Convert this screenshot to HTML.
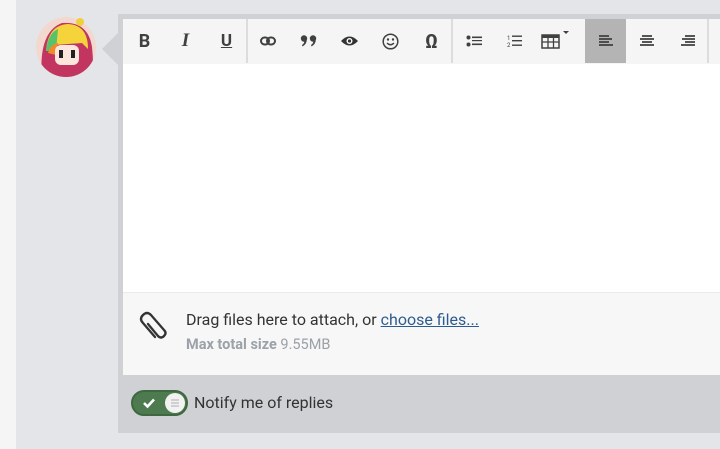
<!DOCTYPE html>
<html><head><style>
*{margin:0;padding:0;box-sizing:border-box}
body{width:720px;height:449px;background:#e4e5e9;position:relative;overflow:hidden;font-family:"Roboto","Liberation Sans",sans-serif}
.strip{position:absolute;left:0;top:0;width:16px;height:449px;background:#f5f5f5}
.outer{position:absolute;left:118px;top:14px;width:610px;height:419px;background:#d0d1d5}
.tb{position:absolute;left:123px;top:19px;width:600px;height:45px;background:#f5f5f5}
.content{position:absolute;left:123px;top:64px;width:600px;height:228px;background:#fff}
.attach{position:absolute;left:123px;top:292px;width:600px;height:83px;background:#f7f7f7;border-top:1px solid #eaeaea}
.btn{position:absolute;top:19px;width:41px;height:44px;display:flex;align-items:center;justify-content:center;color:#404040}
.sep{position:absolute;top:19px;width:2px;height:44px;background:#dcdcdc}
.t1{position:absolute;left:186px;top:310px;font-size:16px;color:#333}
.t1 a{color:#2e5b8f;text-decoration:underline}
.t2{position:absolute;left:186px;top:336px;font-size:14.5px;color:#9ba1a8}
.t3{position:absolute;left:194px;top:393px;font-size:16px;color:#333}
.tog{position:absolute;left:131px;top:390px;width:57px;height:26px;border-radius:13px;background:#4d7a4f;border:2px solid #3f6841}
.knob{position:absolute;right:1px;top:1px;width:20px;height:20px;border-radius:50%;background:#f2f2f2}
</style></head><body>
<div class="strip"></div>
<svg style="position:absolute;left:36px;top:17px" width="62" height="62"><defs><clipPath id="c"><circle cx="30" cy="30" r="30"/></clipPath></defs><g clip-path="url(#c)"><circle cx="30" cy="30" r="30" fill="#f3d8cf"/><path d="M6 62 Q2 15 26 6 Q52 4 56 30 Q58 48 56 62Z" fill="#c23561"/><path d="M10 34 Q12 8 32 7 Q52 8 52 32 L46 26 L18 28Z" fill="#f5d33b"/><path d="M10 34 Q12 16 22 12 L20 34Z" fill="#58c26b"/><path d="M12 36 Q14 28 22 26 L20 38Z" fill="#f08a2a"/><rect x="19" y="28" width="24" height="20" rx="6" fill="#fbe7dc"/><rect x="23" y="33" width="4" height="8" fill="#222"/><rect x="35" y="33" width="4" height="8" fill="#222"/></g><circle cx="44" cy="5" r="4" fill="#f0d03a"/></svg>
<svg style="position:absolute;left:102px;top:32px" width="17" height="34"><path d="M17 0 L0 17 L17 34Z" fill="#d0d1d5"/></svg>
<div class="outer"></div>
<div class="tb"></div>
<div class="content"></div>
<div class="attach"></div>
<div class="btn" style="left:124px;font-weight:bold;font-size:18px">B</div>
<div class="btn" style="left:165px;font-style:italic;font-size:19px;font-family:'Liberation Serif',serif;font-weight:bold">I</div>
<div class="btn" style="left:206px;font-weight:bold;font-size:17px;text-decoration:underline">U</div>
<div class="sep" style="left:246px"></div>
<div class="btn" style="left:247px"><svg width="16" height="10"><rect x="1" y="1.5" width="8" height="7" rx="3.5" fill="none" stroke="#404040" stroke-width="2"/><rect x="7" y="1.5" width="8" height="7" rx="3.5" fill="none" stroke="#404040" stroke-width="2"/></svg></div>
<div class="btn" style="left:288px"><svg width="18" height="12"><circle cx="4" cy="3.5" r="3.2" fill="#404040"/><path d="M6.8 4 Q7 9 2.5 11.5 L2 10 Q5 8 4 5Z" fill="#404040"/><circle cx="13" cy="3.5" r="3.2" fill="#404040"/><path d="M15.8 4 Q16 9 11.5 11.5 L11 10 Q14 8 13 5Z" fill="#404040"/></svg></div>
<div class="btn" style="left:329px"><svg width="19" height="12"><path d="M1 6 Q9.5 -3 18 6 Q9.5 15 1 6Z" fill="#333"/><circle cx="9.5" cy="6" r="3" fill="#fff"/><circle cx="9.5" cy="6" r="1.6" fill="#333"/></svg></div>
<div class="btn" style="left:370px"><svg width="17" height="17"><circle cx="8.5" cy="8.5" r="7.3" fill="none" stroke="#404040" stroke-width="1.5"/><circle cx="6" cy="6.5" r="1.2" fill="#404040"/><circle cx="11" cy="6.5" r="1.2" fill="#404040"/><path d="M5 10 Q8.5 13.5 12 10" fill="none" stroke="#404040" stroke-width="1.4"/></svg></div>
<div class="btn" style="left:411px;font-size:19px;font-weight:bold">Ω</div>
<div class="sep" style="left:451px"></div>
<div class="btn" style="left:453px"><svg width="16" height="12"><circle cx="2.5" cy="2.5" r="2" fill="#404040"/><circle cx="2.5" cy="9.5" r="2" fill="#404040"/><rect x="6" y="1.5" width="10" height="1.6" fill="#404040"/><rect x="6" y="8.5" width="10" height="1.6" fill="#404040"/><rect x="6" y="5" width="10" height="1.2" fill="#404040"/></svg></div>
<div class="btn" style="left:494px"><svg width="16" height="14"><text x="0" y="6" font-size="6" fill="#404040">1</text><text x="0" y="13" font-size="6" fill="#404040">2</text><rect x="5" y="1.5" width="10" height="1.4" fill="#404040"/><rect x="5" y="6" width="10" height="1.4" fill="#404040"/><rect x="5" y="10.5" width="10" height="1.4" fill="#404040"/></svg></div>
<div class="btn" style="left:535px"><svg width="30" height="20"><rect x="1" y="4" width="17" height="13" fill="none" stroke="#404040" stroke-width="1.5"/><rect x="1" y="4" width="17" height="3" fill="#404040"/><path d="M1 11 H18 M7 7 V17 M12.5 7 V17" stroke="#404040" stroke-width="1.3"/><path d="M22 0 L28 0 L25 3Z" fill="#404040"/></svg></div>
<div class="btn" style="left:585px;background:#b4b4b4"><svg width="16" height="12"><path d="M1 1 H11 M1 4 H14 M1 7 H11 M1 10 H15" stroke="#404040" stroke-width="1.8"/></svg></div>
<div class="btn" style="left:626px"><svg width="16" height="12"><path d="M3 1 H13 M1 4 H15 M3 7 H13 M1 10 H15" stroke="#404040" stroke-width="1.8"/></svg></div>
<div class="btn" style="left:667px"><svg width="16" height="12"><path d="M5 1 H15 M2 4 H15 M5 7 H15 M1 10 H15" stroke="#404040" stroke-width="1.8"/></svg></div>
<div class="sep" style="left:707px"></div>
<svg style="position:absolute;left:138px;top:310px" width="30" height="32"><path d="M9 12 L19 24 Q22 27 25 24 Q28 21 25 18 L12 3 Q8 -1 4 3 Q0 7 4 11 L16 25" fill="none" stroke="#333" stroke-width="2.3" stroke-linecap="round" transform="translate(1,2)"/></svg>
<div class="t1">Drag files here to attach, or <a>choose files...</a></div>
<div class="t2"><b>Max total size</b> 9.55MB</div>
<div class="tog"><svg style="position:absolute;left:9px;top:5px" width="14" height="12"><path d="M2 6 L5.5 9.5 L12 2.5" fill="none" stroke="#fff" stroke-width="2.6"/></svg><div class="knob"><svg style="position:absolute;left:5px;top:5px" width="10" height="10"><path d="M1 2 H9 M1 5 H9 M1 8 H9" stroke="#bbb" stroke-width="1.3"/></svg></div></div>
<div class="t3">Notify me of replies</div>
</body></html>
